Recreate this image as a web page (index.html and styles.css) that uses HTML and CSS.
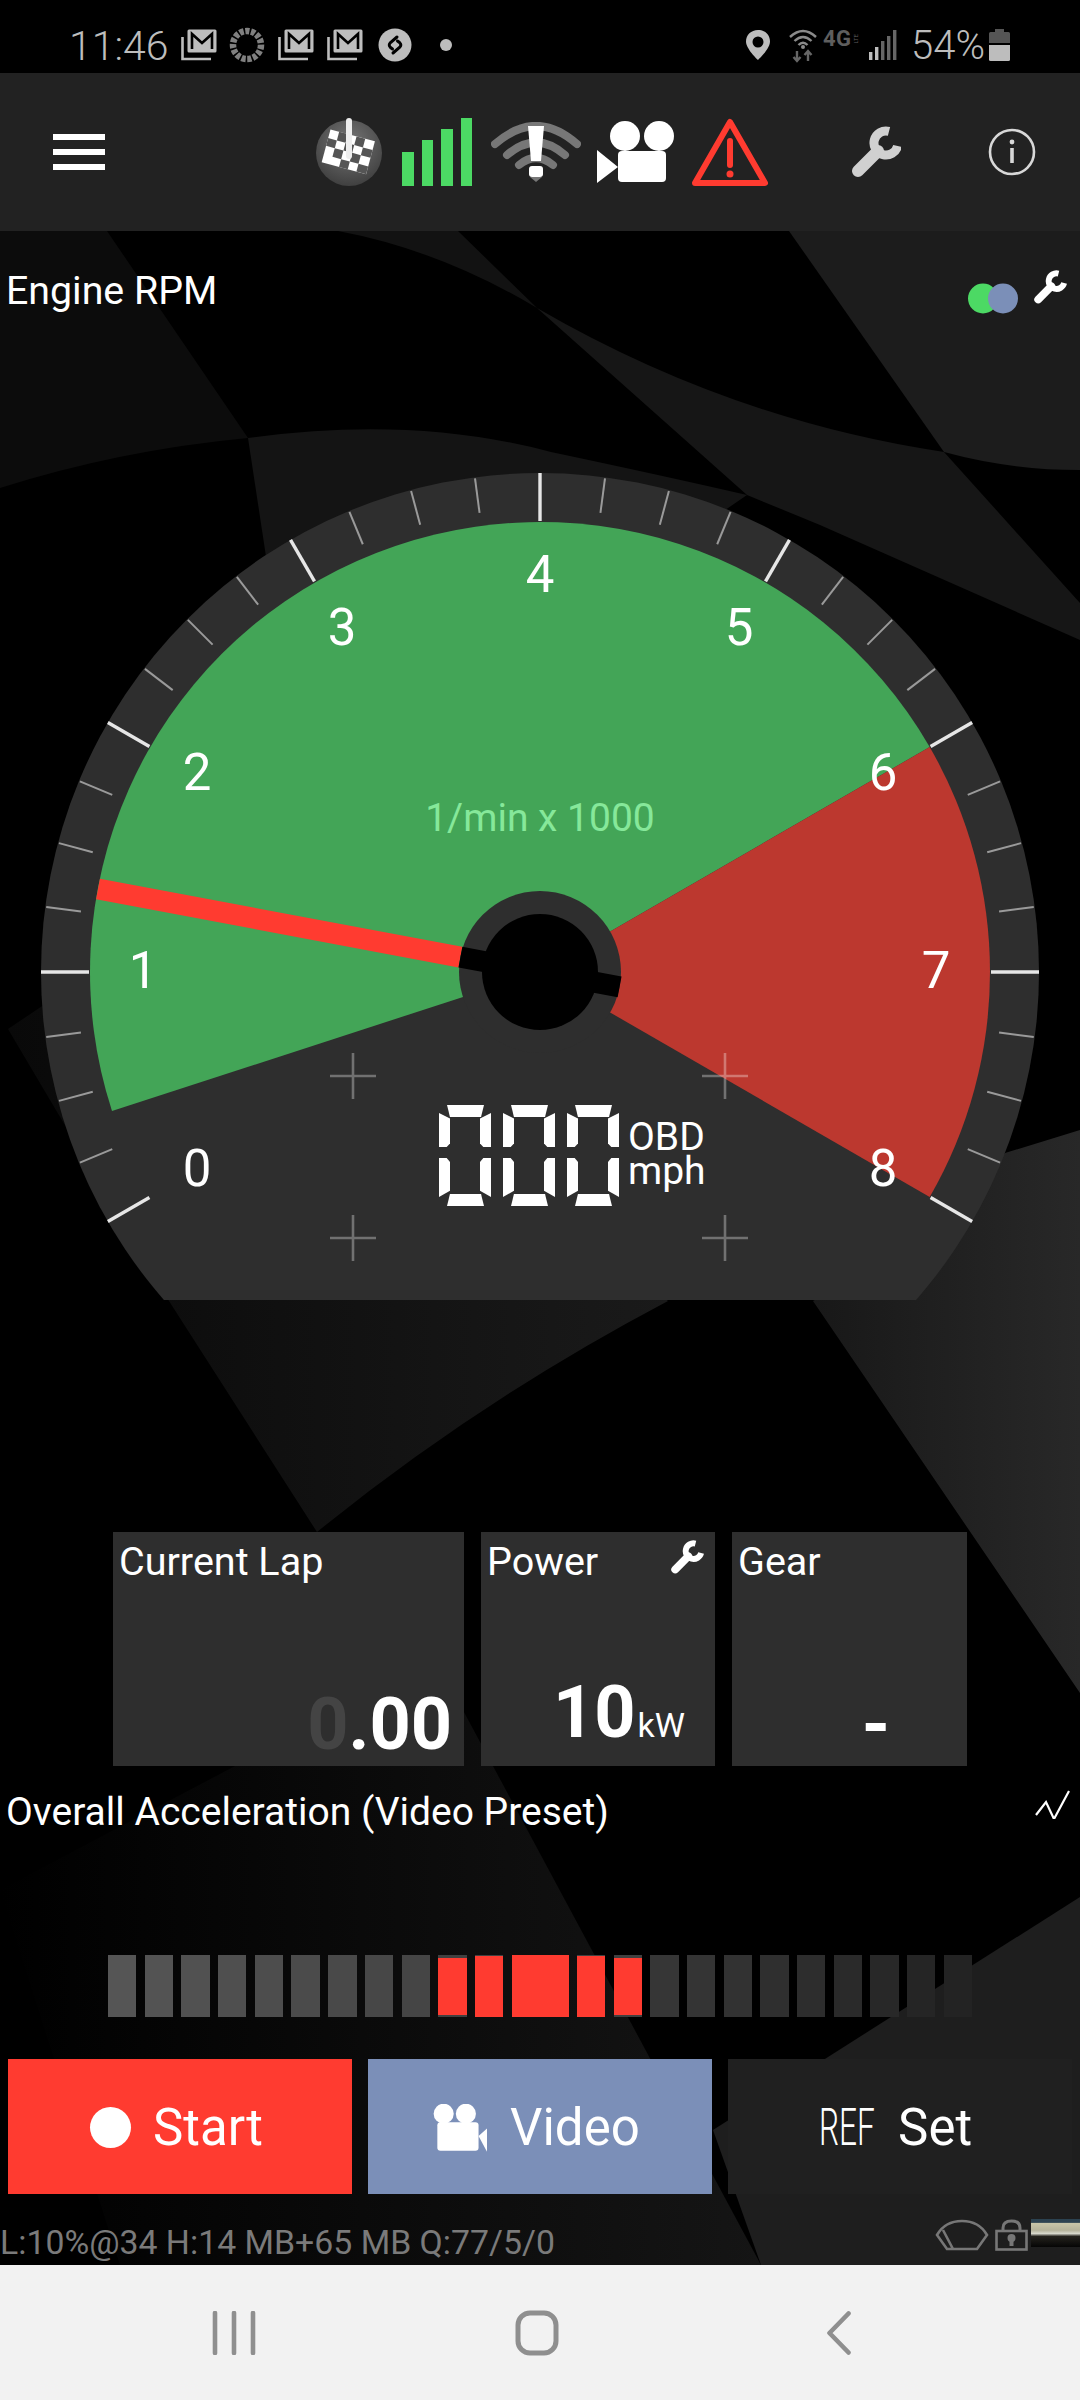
FILE: index.html
```html
<!DOCTYPE html>
<html lang="en">
<head>
<meta charset="utf-8">
<title>Engine RPM</title>
<link rel="stylesheet" href="styles.css">
</head>
<body>
<svg class="defs" width="0" height="0" aria-hidden="true">
  <symbol id="wrench" viewBox="0 0 50 52">
    <path d="M7 45 L27 25" fill="none" stroke="currentColor" stroke-width="12" stroke-linecap="round"/>
    <path d="M38 5.4 A12 12 0 1 0 46.6 20" fill="none" stroke="currentColor" stroke-width="9"/>
  </symbol>
  <symbol id="mail" viewBox="0 0 36 32">
    <path d="M1.5 8 V30 H30" fill="none" stroke="#bdbdbd" stroke-width="2.6"/>
    <rect x="6.5" y="0.5" width="29" height="23" rx="1.5" fill="#bdbdbd"/>
    <path d="M11 20 V5 L21 14 L31 5 V20" fill="none" stroke="#000" stroke-width="2.6"/>
  </symbol>
  <linearGradient id="bgLeft" x1="0" x2="1" y1="0" y2="0">
    <stop offset="0" stop-color="#090909"/><stop offset="1" stop-color="#1a1a1a"/>
  </linearGradient>
  <linearGradient id="bgRight" x1="0" x2="1" y1="0" y2="0">
    <stop offset="0" stop-color="#181818"/><stop offset="1" stop-color="#282828"/>
  </linearGradient>
  <linearGradient id="bgFoot" x1="0" x2="1" y1="0" y2="0">
    <stop offset="0" stop-color="#000"/><stop offset="1" stop-color="#151515"/>
  </linearGradient>
  <radialGradient id="flagDisc" cx="0.5" cy="0.35" r="0.7">
    <stop offset="0" stop-color="#777"/><stop offset="1" stop-color="#3c3c3c"/>
  </radialGradient>
</svg>

<div class="app">
  <header class="status">
    <span class="clock">11:46</span>
    <svg class="st-mail" width="36" height="32"><use href="#mail"/></svg>
    <svg class="st-spin" width="36" height="36" viewBox="0 0 36 36"><circle cx="18" cy="18" r="14" fill="none" stroke="#808080" stroke-width="6.5" stroke-dasharray="4.2 1.6"/></svg>
    <svg class="st-mail-b" width="36" height="32"><use href="#mail"/></svg>
    <svg class="st-mail-c" width="36" height="32"><use href="#mail"/></svg>
    <svg class="st-shazam" width="34" height="34" viewBox="0 0 34 34"><circle cx="17" cy="17" r="16.5" fill="#bdbdbd"/><path d="M19 9 L12.5 14.5 Q10 17 12.5 19.5 L14.5 21 M15 25 L21.5 19.5 Q24 17 21.5 14.5 L19.5 13" fill="none" stroke="#000" stroke-width="3" stroke-linecap="round"/></svg>
    <span class="st-dot"></span>
    <svg class="st-pin" width="24" height="30" viewBox="0 0 24 30"><path fill-rule="evenodd" d="M12 0 C5 0 0 5 0 11.5 C0 19 12 30 12 30 C12 30 24 19 24 11.5 C24 5 19 0 12 0 Z M12 6.5 A5.5 5.5 0 1 1 12 17.5 A5.5 5.5 0 1 1 12 6.5 Z" fill="#bdbdbd"/></svg>
    <svg class="st-wifi" width="28" height="36" viewBox="0 0 28 36"><path d="M1 10 Q14 -2 27 10 M5.5 14 Q14 6 22.5 14 M9.5 18 Q14 13.5 18.5 18" fill="none" stroke="#8a8a8a" stroke-width="2.4"/><circle cx="14" cy="20" r="2" fill="#8a8a8a"/><path d="M8 24 V34 M4.5 30 L8 34 L11.5 30 M19 34 V24 M15.5 28 L19 24 L22.5 28" fill="none" stroke="#666" stroke-width="2.4"/></svg>
    <span class="st-net"><b>4G</b><i>LTE</i></span>
    <svg class="st-signal" width="28" height="30" viewBox="0 0 28 30"><rect x="0" y="22" width="3.4" height="8" fill="#bdbdbd"/><rect x="6" y="17" width="3.4" height="13" fill="#bdbdbd"/><rect x="12" y="11" width="3.4" height="19" fill="#666"/><rect x="18" y="6" width="3.4" height="24" fill="#666"/><rect x="24" y="0" width="3.4" height="30" fill="#666"/></svg>
    <span class="st-level">54%</span>
    <svg class="st-batt" width="21" height="32" viewBox="0 0 21 32"><path d="M6 0 H15 V3 H19.5 Q21 3 21 4.5 V14 H0 V4.5 Q0 3 1.5 3 H6 Z" fill="#555"/><path d="M0 16 H21 V30.5 Q21 32 19.5 32 H1.5 Q0 32 0 30.5 Z" fill="#bdbdbd"/></svg>
  </header>

  <nav class="toolbar">
    <span class="burger"><i></i><i></i><i></i></span>
    <svg class="tb-flag" width="66" height="68" viewBox="0 0 66 68" aria-hidden="true">
      <circle cx="33" cy="35" r="33" fill="url(#flagDisc)"/>
      <g transform="rotate(15 33 35)">
        <rect x="9" y="17" width="46" height="34" fill="#fff"/>
        <rect x="18" y="17" width="9" height="9" fill="#555"/><rect x="36" y="17" width="9" height="9" fill="#555"/>
        <rect x="9" y="26" width="9" height="8" fill="#555"/><rect x="27" y="26" width="9" height="8" fill="#555"/><rect x="45" y="26" width="10" height="8" fill="#555"/>
        <rect x="18" y="34" width="9" height="9" fill="#555"/><rect x="36" y="34" width="9" height="9" fill="#555"/>
        <rect x="27" y="43" width="9" height="8" fill="#555"/><rect x="45" y="43" width="10" height="8" fill="#555"/>
      </g>
      <path d="M33 3 V38" stroke="#eee" stroke-width="6" stroke-linecap="round"/>
    </svg>
    <span class="tb-bars"><i class="b1"></i><i class="b2"></i><i class="b3"></i><i class="b4"></i></span>
    <svg class="tb-wifi" width="90" height="60" viewBox="0 0 90 60" aria-hidden="true">
      <path d="M4 22 Q45 -14 86 22 M16 33 Q45 8 74 33 M28 43 Q45 29 62 43" fill="none" stroke="#777" stroke-width="8" stroke-linecap="round"/>
      <path d="M37 4 H53 L50 39 H40 Z" fill="#fff"/>
      <rect x="38" y="44" width="14" height="11" rx="3" fill="#fff"/>
      <path d="M39 55 H51 L45 60 Z" fill="#777"/>
    </svg>
    <svg class="tb-cam" width="77" height="64" viewBox="0 0 77 64" aria-hidden="true">
      <circle cx="28" cy="16" r="15" fill="#fff"/><circle cx="62" cy="16" r="15" fill="#fff"/>
      <rect x="21" y="31" width="48" height="31" rx="4" fill="#fff"/>
      <path d="M0 30 L21 47 L0 63 Z" fill="#fff"/>
    </svg>
    <svg class="tb-warn" width="84" height="70" viewBox="0 0 84 70" aria-hidden="true">
      <path d="M42 5 L77 66 H7 Z" fill="none" stroke="#ff3b30" stroke-width="6" stroke-linejoin="round"/>
      <path d="M42 24 V48" stroke="#ff3b30" stroke-width="6" stroke-linecap="round"/>
      <circle cx="42" cy="57" r="3.5" fill="#ff3b30"/>
    </svg>
    <svg class="tb-wrench" width="50" height="52"><use href="#wrench"/></svg>
    <svg class="tb-info" width="48" height="48" viewBox="0 0 48 48" aria-hidden="true">
      <circle cx="24" cy="24" r="22" fill="none" stroke="#d8d8d8" stroke-width="2.6"/>
      <circle cx="24" cy="14" r="2.4" fill="#d8d8d8"/>
      <path d="M24 20 V35" stroke="#d8d8d8" stroke-width="3.6"/>
    </svg>
  </nav>

  <main class="content">
    <svg class="backdrop" viewBox="0 231 1080 2034" aria-hidden="true">
      <path d="M0 231 H107 L248 438 Q120 450 0 488 Z" fill="#0c0c0c"/>
      <path d="M338 231 H458 L537 308 Q440 250 338 231 Z" fill="#121212"/>
      <path d="M248 438 Q413 415 551 452 Q660 475 747 495 L303 800 Z" fill="#141414"/>
      <path d="M537 308 Q730 420 944 452 L1080 603 V640 L820 525 L747 495 Z" fill="#161616"/>
      <path d="M789 231 H1080 V470 Q1010 470 944 452 Z" fill="#1c1c1c"/>
      <path d="M8 1029 L200 900 L668 1301 Q480 1400 317 1532 L169 1301 Z" fill="url(#bgLeft)"/>
      <path d="M1005 1153 L1080 1130 V1693 L813 1301 L900 1250 Z" fill="url(#bgRight)"/>
      <path d="M0 1890 L436 1660 L761 2265 H120 Z" fill="url(#bgFoot)"/>
      <path d="M1080 1897 V2265 H761 L713 2130 Z" fill="#1e1e1e"/>
    </svg>

    <div class="head">
      <span class="title">Engine RPM</span>
      <span class="head-tools">
        <svg class="dots" width="52" height="31" viewBox="0 0 52 31" aria-hidden="true"><circle cx="16" cy="15.5" r="15" fill="#4cd964"/><circle cx="36" cy="15.5" r="15" fill="#7b8fb8"/></svg>
        <svg class="tiny-wrench" width="40" height="34"><use href="#wrench"/></svg>
      </span>
    </div>

    <section class="gauge">
      <svg class="dial" width="1080" height="827" viewBox="0 0 1080 827" aria-hidden="true">
        <defs>
          <line id="tick-major" x1="41" y1="499" x2="89" y2="499"/>
          <line id="tick-minor" x1="42" y1="499" x2="77" y2="499"/>
          <path id="cross" d="M-23 0 H23 M0 -23 V23"/>
        </defs>
        <circle cx="540" cy="499" r="499" fill="#2e2e2e"/>
        <path d="M540 499 L112 638 A450 450 0 0 1 929.7 274 Z" fill="#43a557"/>
        <path d="M540 499 L929.7 274 A450 450 0 0 1 929.7 724 Z" fill="#bc382f"/>
        <g class="ticks-minor">
          <use href="#tick-minor" transform="rotate(-22.5 540 499)"/><use href="#tick-minor" transform="rotate(-15 540 499)"/><use href="#tick-minor" transform="rotate(-7.5 540 499)"/>
          <use href="#tick-minor" transform="rotate(7.5 540 499)"/><use href="#tick-minor" transform="rotate(15 540 499)"/><use href="#tick-minor" transform="rotate(22.5 540 499)"/>
          <use href="#tick-minor" transform="rotate(37.5 540 499)"/><use href="#tick-minor" transform="rotate(45 540 499)"/><use href="#tick-minor" transform="rotate(52.5 540 499)"/>
          <use href="#tick-minor" transform="rotate(67.5 540 499)"/><use href="#tick-minor" transform="rotate(75 540 499)"/><use href="#tick-minor" transform="rotate(82.5 540 499)"/>
          <use href="#tick-minor" transform="rotate(97.5 540 499)"/><use href="#tick-minor" transform="rotate(105 540 499)"/><use href="#tick-minor" transform="rotate(112.5 540 499)"/>
          <use href="#tick-minor" transform="rotate(127.5 540 499)"/><use href="#tick-minor" transform="rotate(135 540 499)"/><use href="#tick-minor" transform="rotate(142.5 540 499)"/>
          <use href="#tick-minor" transform="rotate(157.5 540 499)"/><use href="#tick-minor" transform="rotate(165 540 499)"/><use href="#tick-minor" transform="rotate(172.5 540 499)"/>
          <use href="#tick-minor" transform="rotate(187.5 540 499)"/><use href="#tick-minor" transform="rotate(195 540 499)"/><use href="#tick-minor" transform="rotate(202.5 540 499)"/>
        </g>
        <g class="ticks-major">
          <use href="#tick-major" transform="rotate(-30 540 499)"/><use href="#tick-major"/><use href="#tick-major" transform="rotate(30 540 499)"/>
          <use href="#tick-major" transform="rotate(60 540 499)"/><use href="#tick-major" transform="rotate(90 540 499)"/><use href="#tick-major" transform="rotate(120 540 499)"/>
          <use href="#tick-major" transform="rotate(150 540 499)"/><use href="#tick-major" transform="rotate(180 540 499)"/><use href="#tick-major" transform="rotate(210 540 499)"/>
        </g>
        <g class="crosses">
          <use href="#cross" x="353" y="603"/><use href="#cross" x="725" y="603"/>
          <use href="#cross" x="353" y="765"/><use href="#cross" x="725" y="765"/>
        </g>
        <line x1="460.4" y1="484.1" x2="98" y2="416" stroke="#ff3b30" stroke-width="21"/>
        <circle cx="540" cy="499" r="81" fill="#2e2e2e"/>
        <line x1="460.4" y1="484.1" x2="619.6" y2="513.9" stroke="#000" stroke-width="21"/>
        <circle cx="540" cy="499" r="58" fill="#000"/>
      </svg>
      <svg class="labels" width="1080" height="827" viewBox="0 0 1080 827">
        <g class="scale">
          <text x="197" y="713">0</text><text x="143" y="515">1</text><text x="197" y="317">2</text>
          <text x="342" y="172">3</text><text x="540" y="119">4</text><text x="739" y="172">5</text>
          <text x="883" y="317">6</text><text x="936" y="515">7</text><text x="883" y="713">8</text>
        </g>
        <text class="unit" x="540" y="358">1/min x 1000</text>
      </svg>
      <div class="speed" role="img" aria-label="000 mph">
        <span class="digit"><i class="sg t"></i><i class="sg tl"></i><i class="sg tr"></i><i class="sg bl"></i><i class="sg br"></i><i class="sg b"></i></span>
        <span class="digit"><i class="sg t"></i><i class="sg tl"></i><i class="sg tr"></i><i class="sg bl"></i><i class="sg br"></i><i class="sg b"></i></span>
        <span class="digit"><i class="sg t"></i><i class="sg tl"></i><i class="sg tr"></i><i class="sg bl"></i><i class="sg br"></i><i class="sg b"></i></span>
        <span class="speed-src"><span>OBD</span><span>mph</span></span>
      </div>
    </section>

    <div class="cards">
      <article class="card card-lap">
        <h3>Current Lap</h3>
        <p class="value"><span class="dim">0</span>.00</p>
      </article>
      <article class="card card-power">
        <h3>Power</h3>
        <svg class="card-wrench" width="40" height="34"><use href="#wrench"/></svg>
        <p class="value">10<small>kW</small></p>
      </article>
      <article class="card card-gear">
        <h3>Gear</h3>
        <p class="value">-</p>
      </article>
    </div>

    <div class="accel-head">
      <span class="title accel-title">Overall Acceleration (Video Preset)</span>
      <svg class="zigzag" width="36" height="30" viewBox="0 0 36 30" aria-hidden="true"><path d="M1 26 L11 13 L19 30 L34 2" fill="none" stroke="#fff" stroke-width="2.2"/></svg>
    </div>

    <div class="meter">
      <i class="seg" style="background:#555"></i><i class="seg" style="background:#535353"></i><i class="seg" style="background:#515151"></i>
      <i class="seg" style="background:#4f4f4f"></i><i class="seg" style="background:#4d4d4d"></i><i class="seg" style="background:#4b4b4b"></i>
      <i class="seg" style="background:#494949"></i><i class="seg" style="background:#474747"></i><i class="seg" style="background:#454545"></i>
      <i class="seg hot hot-a"></i><i class="seg hot hot-b"></i><i class="seg hot hot-c"></i><i class="seg hot hot-b"></i><i class="seg hot hot-a"></i>
      <i class="seg" style="background:#363636"></i><i class="seg" style="background:#343434"></i><i class="seg" style="background:#323232"></i>
      <i class="seg" style="background:#2f2f2f"></i><i class="seg" style="background:#2d2d2d"></i><i class="seg" style="background:#2a2a2a"></i>
      <i class="seg" style="background:#282828"></i><i class="seg" style="background:#252525"></i><i class="seg" style="background:#232323"></i>
    </div>

    <div class="actions">
      <button class="act act-start"><span class="rec"></span>Start</button>
      <button class="act act-video">
        <svg width="56" height="48" viewBox="0 0 53 45" aria-hidden="true"><circle cx="12" cy="9" r="9.5" fill="#fff"/><circle cx="33" cy="9" r="9.5" fill="#fff"/><rect x="6" y="17" width="39" height="27" rx="3" fill="#fff"/><path d="M45 30 L53 23 V45 Z" fill="#fff"/></svg>
        Video
      </button>
      <button class="act act-ref"><span class="ref">REF</span>Set</button>
    </div>

    <footer class="foot">
      <span class="stats">L:10%@34 H:14 MB+65 MB Q:77/5/0</span>
      <span class="foot-icons">
        <svg width="54" height="32" viewBox="0 0 54 32" aria-hidden="true"><path d="M2 16 Q10 2 27 2 Q44 2 52 16 L42 30 H12 Z M8 11 L18 30" fill="none" stroke="#777" stroke-width="2.6"/></svg>
        <svg width="33" height="32" viewBox="0 0 33 32" aria-hidden="true"><path d="M8 13 V9 Q8 2 16.5 2 Q25 2 25 9 V13" fill="none" stroke="#777" stroke-width="3"/><rect x="1.5" y="12" width="30" height="18.5" fill="none" stroke="#777" stroke-width="2.6"/><circle cx="16.5" cy="19" r="4" fill="#777"/><rect x="14.5" y="20" width="4" height="7" fill="#777"/></svg>
        <span class="thumb"></span>
      </span>
    </footer>
  </main>

  <div class="navbar">
    <svg class="nv-recent" width="44" height="44" viewBox="0 0 44 44" aria-hidden="true"><path d="M3 2 V42 M22 2 V42 M41 2 V42" fill="none" stroke="#8f8f8f" stroke-width="4.6" stroke-linecap="round"/></svg>
    <svg class="nv-home" width="44" height="46" viewBox="0 0 44 46" aria-hidden="true"><rect x="3" y="3" width="38" height="40" rx="12" fill="none" stroke="#8f8f8f" stroke-width="5"/></svg>
    <svg class="nv-back" width="26" height="44" viewBox="0 0 26 44" aria-hidden="true"><path d="M22.5 2.5 L3.5 22 L22.5 41.5" fill="none" stroke="#8f8f8f" stroke-width="4.6" stroke-linecap="round" stroke-linejoin="round"/></svg>
  </div>
</div>
</body>
</html>
```

FILE: styles.css
```css
* { box-sizing: border-box; }

html, body {
  margin: 0;
  padding: 0;
  background: #000;
}

body {
  font-family: Roboto, "Liberation Sans", sans-serif;
  color: #fff;
}

.defs { position: absolute; }

.app {
  width: 1080px;
  height: 2400px;
  display: flex;
  flex-direction: column;
  overflow: hidden;
}

/* Status bar */
.status {
  height: 73px;
  background: #000;
  display: flex;
  align-items: center;
  padding-left: 69px;
  padding-top: 17px;
  color: #bdbdbd;
  flex: none;
}
.clock { font-size: 41px; font-weight: 300; width: 97px; margin-top: 1px; white-space: nowrap; }
.st-mail { margin-left: 15px; }
.st-spin { margin-left: 12px; margin-top: -1px; }
.st-mail-b { margin-left: 13px; }
.st-mail-c { margin-left: 13px; }
.st-shazam { margin-left: 15px; margin-top: -1px; }
.st-dot { width: 12px; height: 12px; border-radius: 50%; background: #bdbdbd; margin-left: 28px; }
.st-pin { margin-left: 294px; }
.st-wifi { margin-left: 19px; margin-top: -1px; }
.st-net { width: 42px; margin-left: 6px; display: flex; align-items: center; color: #5e5e5e; margin-top: -12px; }
.st-net b { font-size: 22px; font-weight: 700; line-height: 16px; letter-spacing: 0.5px; }
.st-net i { font-size: 6px; font-style: normal; writing-mode: vertical-rl; transform: rotate(180deg); line-height: 6px; margin-left: 1px; }
.st-signal { margin-left: 4px; }
.st-level { font-size: 40px; font-weight: 300; margin-left: 14px; width: 78px; margin-top: 1px; white-space: nowrap; }
.st-batt { margin-left: 0; }

/* App toolbar */
.toolbar {
  height: 158px;
  background: #222;
  display: flex;
  align-items: center;
  padding-left: 53px;
  flex: none;
}
.burger { width: 52px; display: flex; flex-direction: column; gap: 9px; }
.burger i { display: block; height: 6px; background: #fff; }
.tb-flag { margin-left: 211px; }
.tb-bars { margin-left: 20px; width: 70px; height: 68px; display: flex; align-items: flex-end; gap: 8px; }
.tb-bars i { display: block; width: 11.5px; background: #4cd964; }
.tb-bars .b1 { height: 34px; }
.tb-bars .b2 { height: 46px; }
.tb-bars .b3 { height: 57px; }
.tb-bars .b4 { height: 68px; }
.tb-wifi { margin-left: 19px; }
.tb-cam { margin-left: 16px; }
.tb-warn { margin-left: 14px; }
.tb-wrench { margin-left: 79px; color: #d0d0d0; }
.tb-info { margin-left: 87px; }

/* Main area */
.content {
  position: relative;
  height: 2034px;
  flex: none;
  background: #000;
  display: flex;
  flex-direction: column;
}
.backdrop {
  position: absolute;
  left: 0;
  top: 0;
  width: 1080px;
  height: 2034px;
}
.head, .gauge, .cards, .accel-head, .meter, .actions, .foot { position: relative; flex: none; }

.title { font-size: 39.3px; line-height: 44px; white-space: nowrap; }
.accel-title { font-size: 39px; }

.head {
  height: 242px;
  padding: 38px 10px 0 6px;
  display: flex;
  justify-content: space-between;
  align-items: flex-start;
}
.head-tools { display: flex; align-items: flex-start; gap: 11px; }
.dots { margin-top: 14px; }
.tiny-wrench { margin-top: 1px; color: #fff; }

/* Gauge */
.gauge { height: 827px; }
.dial, .labels { position: absolute; left: 0; top: 0; display: block; }
.ticks-minor { stroke: #9a9a9a; stroke-width: 2; }
.ticks-major { stroke: #e6e6e6; stroke-width: 3.4; }
.crosses { fill: none; stroke: rgba(255, 255, 255, 0.32); stroke-width: 2.6; }
.scale text { font-size: 51px; fill: #fff; text-anchor: middle; }
.unit { font-size: 39px; fill: #86e89a; text-anchor: middle; }

.speed {
  position: absolute;
  left: 439px;
  top: 632px;
  display: flex;
  gap: 12px;
}
.digit { position: relative; display: block; width: 52px; height: 101px; }
.sg { position: absolute; background: #fff; display: block; }
.sg.t { left: 8px; top: 0; width: 37px; height: 12px; clip-path: polygon(0 0, 100% 0, 92% 100%, 8% 100%); }
.sg.b { left: 8px; top: 89px; width: 37px; height: 12px; clip-path: polygon(8% 0, 92% 0, 100% 100%, 0 100%); }
.sg.tl { left: 0; top: 8px; width: 11px; height: 34px; clip-path: polygon(0 0, 100% 16%, 100% 90%, 70% 100%, 0 100%); }
.sg.tr { left: 41px; top: 8px; width: 11px; height: 34px; clip-path: polygon(100% 0, 0 16%, 0 90%, 30% 100%, 100% 100%); }
.sg.bl { left: 0; top: 53px; width: 11px; height: 39px; clip-path: polygon(0 0, 70% 0, 100% 10%, 100% 84%, 0 100%); }
.sg.br { left: 41px; top: 53px; width: 11px; height: 39px; clip-path: polygon(30% 0, 100% 0, 100% 100%, 0 84%, 0 10%); }
.speed-src {
  display: flex;
  flex-direction: column;
  font-size: 39px;
  line-height: 34px;
  margin: 15px 0 0 -3px;
}

/* Data cards */
.cards {
  margin-top: 232px;
  height: 234px;
  padding-left: 113px;
  display: flex;
  gap: 17px;
}
.card {
  position: relative;
  background: #2e2e2e;
  height: 234px;
  padding: 8px 6px 0;
}
.card-lap { width: 351px; }
.card-power { width: 234px; }
.card-gear { width: 235px; }
.card h3 { margin: 0; font-size: 39.5px; font-weight: 400; line-height: 44px; }
.card .value {
  position: absolute;
  right: 12px;
  bottom: 5px;
  margin: 0;
  font-size: 72px;
  font-weight: 700;
  line-height: 72px;
  display: flex;
  align-items: baseline;
}
.card .dim { color: #444; }
.card small { font-size: 34px; font-weight: 400; margin-left: 2px; }
.card-power .value { right: 30px; }
.card-gear .value { right: 77px; }
.card-wrench { position: absolute; right: 8px; top: 8px; color: #fff; }

/* Acceleration meter */
.accel-head {
  margin-top: 24px;
  height: 44px;
  padding: 0 9px 0 6px;
  display: flex;
  justify-content: space-between;
  align-items: center;
}
.zigzag { margin-top: -16px; }
.meter {
  margin-top: 121px;
  margin-left: 108px;
  height: 62px;
  display: flex;
  gap: 8.3px;
}
.seg { display: block; width: 28.4px; height: 62px; position: relative; }
.seg.hot { background: #404040; }
.seg.hot::after { content: ""; position: absolute; left: 0; right: 0; background: #ff3b30; }
.hot-a::after { top: 3px; bottom: 2px; }
.hot-b::after { top: 1px; bottom: 0; }
.hot-c { width: 57px; }
.hot-c::after { top: 0; bottom: 0; }

/* Action buttons */
.actions {
  margin-top: 42px;
  height: 135px;
  padding-left: 8px;
  display: flex;
  gap: 16px;
}
.act {
  width: 344px;
  height: 135px;
  border: 0;
  padding: 2px 0 0;
  color: #fff;
  font-family: inherit;
  font-size: 51px;
  display: flex;
  align-items: center;
  text-align: left;
}
.act-start { background: #ff3b30; padding-left: 82px; }
.act-video { background: #7b8fb8; padding-left: 63px; gap: 23px; }
.act-ref { background: #202020; padding-left: 91px; }
.rec { width: 41px; height: 41px; border-radius: 50%; background: #fff; margin-right: 22px; }
.ref {
  display: inline-block;
  font-weight: 300;
  transform: scaleX(0.62);
  transform-origin: left center;
  margin-right: -11px;
}

/* Diagnostics line */
.foot {
  height: 71px;
  display: flex;
  justify-content: space-between;
  align-items: flex-start;
}
.stats { font-size: 33.8px; line-height: 36px; color: #7a7a7a; margin-top: 31px; white-space: nowrap; }
.foot-icons { display: flex; align-items: flex-start; gap: 6px; margin-top: 25px; }
.thumb {
  display: block;
  width: 49px;
  height: 28px;
  margin-left: -3px;
  background: linear-gradient(#2c4250 0, #2c4250 12%, #c7c5a8 16%, #b5b39a 40%, #d8d8cc 52%, #25231d 62%, #050505 100%);
}

/* System navigation */
.navbar {
  height: 135px;
  flex: none;
  background: #f2f2f2;
  display: flex;
  align-items: center;
  padding-left: 212px;
}
.nv-home { margin-left: 259px; }
.nv-back { margin-left: 267px; }
```
